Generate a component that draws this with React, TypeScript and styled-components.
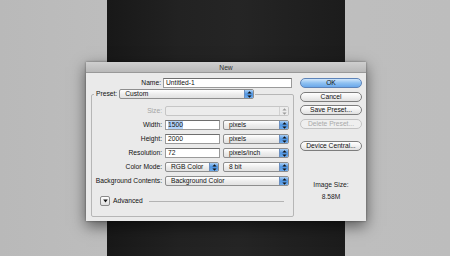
import React from "react";
import styled, { createGlobalStyle, css } from "styled-components";

const Global = createGlobalStyle`
  html, body { margin: 0; padding: 0; }
  body {
    background: #bebebe;
    font-family: "Liberation Sans", Arial, sans-serif;
  }
`;

const Stage = styled.div`
  position: relative;
  width: 450px;
  height: 256px;
  overflow: hidden;
  display: flex;
  background: linear-gradient(90deg, #b9b9b9 0%, #c0c0c0 40%, #bdbdbd 100%);
`;

const DarkPanel = styled.div`
  margin-left: 107px;
  width: 238px;
  height: 256px;
  background: linear-gradient(90deg, #181818 0%, #222 30%, #252525 55%, #1c1c1c 100%);
`;

const Dialog = styled.div`
  position: absolute;
  left: 86px;
  top: 62px;
  width: 280px;
  height: 159px;
  display: flex;
  flex-direction: column;
  background: #eaeaea;
  box-shadow: 0 5px 14px rgba(0, 0, 0, 0.55), 0 0 2px rgba(0, 0, 0, 0.4);
  font-size: 6.7px;
  color: #111;
`;

const TitleBar = styled.div`
  height: 11px;
  flex: none;
  display: flex;
  align-items: center;
  justify-content: center;
  background: linear-gradient(#cfcfcf, #b9b9b9);
  border-bottom: 1px solid #999;
  box-sizing: border-box;
  color: #333;
  font-size: 6.7px;
`;

const Body = styled.div`
  flex: 1;
  display: grid;
  grid-template-columns: 208px 62px;
  column-gap: 6px;
  padding: 5px 4px 0 0;
`;

const LeftCol = styled.div`
  display: flex;
  flex-direction: column;
`;

const NameRow = styled.div`
  display: grid;
  grid-template-columns: 75px 129px;
  column-gap: 2px;
  height: 10px;
  align-items: center;
`;

const Label = styled.span<{ $disabled?: boolean }>`
  text-align: right;
  white-space: nowrap;
  line-height: 10px;
  color: ${(p) => (p.$disabled ? "#a4a4a4" : "#111")};
`;

const TextInput = styled.div`
  height: 10px;
  box-sizing: border-box;
  background: #fff;
  border: 1px solid #9a9a9a;
  border-top-color: #6e6e6e;
  padding-left: 2px;
  display: flex;
  align-items: center;
  line-height: 8px;
  white-space: nowrap;
  overflow: hidden;
`;

const Selected = styled.span`
  background: #b3d2f7;
`;

const Group = styled.fieldset`
  margin: 1px 0 0 5px;
  padding: 0 4px 0 0;
  width: 203px;
  height: 128px;
  box-sizing: border-box;
  border: 1px solid #b6b6b6;
  border-radius: 2px;
  min-width: 0;
`;

const Legend = styled.legend`
  padding: 0 1px 0 2px;
  margin-left: 2px;
  display: flex;
  align-items: center;
  gap: 2px;
  height: 10px;
`;

const Rows = styled.div`
  display: flex;
  flex-direction: column;
  gap: 4px;
  padding-top: 7px;
`;

const FieldRow = styled.div`
  display: grid;
  grid-template-columns: 70px 1fr;
  column-gap: 3px;
  height: 10px;
  align-items: center;
`;

const Pair = styled.div<{ $first: number }>`
  display: grid;
  grid-template-columns: ${(p) => p.$first}px 1fr;
  column-gap: ${(p) => 58 - p.$first}px;
  height: 10px;
`;

const SelectBox = styled.div<{ $w?: number; $disabled?: boolean }>`
  height: 10px;
  box-sizing: border-box;
  ${(p) => (p.$w ? `width: ${p.$w}px;` : "")}
  display: flex;
  align-items: stretch;
  border: 1px solid #8e8e8e;
  border-radius: 2px;
  background: linear-gradient(#ffffff, #ececec 55%, #e2e2e2);
  overflow: hidden;
  ${(p) =>
    p.$disabled &&
    css`
      border-color: #c6c6c6;
      background: #ececec;
    `}
`;

const SelectText = styled.span`
  flex: 1;
  padding-left: 5px;
  line-height: 8px;
  white-space: nowrap;
  overflow: hidden;
`;

const Stepper = styled.span<{ $disabled?: boolean }>`
  width: 8px;
  flex: none;
  display: flex;
  align-items: center;
  justify-content: center;
  border-left: 1px solid #6b8fc0;
  background: linear-gradient(#a9cff5, #4d94e2 50%, #6eaaea);
  ${(p) =>
    p.$disabled &&
    css`
      border-left-color: #d2d2d2;
      background: #ececec;
    `}
`;

const AdvancedRow = styled.div`
  display: flex;
  align-items: center;
  height: 10px;
  margin: 10px 0 0 8px;
`;

const Disclosure = styled.span`
  width: 10px;
  height: 10px;
  box-sizing: border-box;
  border: 1px solid #8a8a8a;
  border-radius: 2px;
  background: linear-gradient(#ffffff, #dedede);
  display: flex;
  align-items: center;
  justify-content: center;
`;

const AdvText = styled.span`
  margin-left: 3px;
  line-height: 10px;
`;

const Rule = styled.span`
  flex: 1;
  height: 1px;
  background: #b3b3b3;
  margin: 0 5px 0 6px;
`;

const RightCol = styled.div`
  display: flex;
  flex-direction: column;
  gap: 3.5px;
`;

const Button = styled.div<{ $primary?: boolean; $disabled?: boolean; $gapTop?: number }>`
  height: 10px;
  box-sizing: border-box;
  border-radius: 6px;
  border: 1px solid #7d7d7d;
  background: linear-gradient(#ffffff, #f1f1f1 50%, #e0e0e0);
  display: flex;
  align-items: center;
  justify-content: center;
  line-height: 8px;
  white-space: nowrap;
  ${(p) => (p.$gapTop ? `margin-top: ${p.$gapTop}px;` : "")}
  ${(p) =>
    p.$primary &&
    css`
      border-color: #5d83b8;
      background: linear-gradient(#cfe6fb, #8fc1f1 50%, #6aa8ea);
    `}
  ${(p) =>
    p.$disabled &&
    css`
      border-color: #c3c3c3;
      color: #a9a9a9;
      background: #efefef;
    `}
`;

const ImageSize = styled.div`
  margin-top: 27px;
  display: flex;
  flex-direction: column;
  align-items: center;
  gap: 4px;
  line-height: 8px;
  color: #222;
`;

const Arrows: React.FC<{ color?: string }> = ({ color = "#111" }) => (
  <svg width="5" height="7" viewBox="0 0 5 7">
    <path d="M2.5 0.3 L4.6 2.6 L0.4 2.6 Z" fill={color} />
    <path d="M2.5 6.7 L4.6 4.4 L0.4 4.4 Z" fill={color} />
  </svg>
);

const Select: React.FC<{ text?: string; w?: number; disabled?: boolean }> = ({ text = "", w, disabled }) => (
  <SelectBox $w={w} $disabled={disabled}>
    <SelectText>{text}</SelectText>
    <Stepper $disabled={disabled}>
      <Arrows color={disabled ? "#9a9a9a" : "#111"} />
    </Stepper>
  </SelectBox>
);

export default function App() {
  return (
    <>
      <Global />
      <Stage>
        <DarkPanel />
        <Dialog>
          <TitleBar>New</TitleBar>
          <Body>
            <LeftCol>
              <NameRow>
                <Label>Name:</Label>
                <TextInput>Untitled-1</TextInput>
              </NameRow>
              <Group>
                <Legend>
                  <Label>Preset:</Label>
                  <Select text="Custom" w={135} />
                </Legend>
                <Rows>
                  <FieldRow>
                    <Label $disabled>Size:</Label>
                    <Select disabled />
                  </FieldRow>
                  <FieldRow>
                    <Label>Width:</Label>
                    <Pair $first={55}>
                      <TextInput>
                        <Selected>1500</Selected>
                      </TextInput>
                      <Select text="pixels" />
                    </Pair>
                  </FieldRow>
                  <FieldRow>
                    <Label>Height:</Label>
                    <Pair $first={55}>
                      <TextInput>2000</TextInput>
                      <Select text="pixels" />
                    </Pair>
                  </FieldRow>
                  <FieldRow>
                    <Label>Resolution:</Label>
                    <Pair $first={55}>
                      <TextInput>72</TextInput>
                      <Select text="pixels/inch" />
                    </Pair>
                  </FieldRow>
                  <FieldRow>
                    <Label>Color Mode:</Label>
                    <Pair $first={54}>
                      <Select text="RGB Color" />
                      <Select text="8 bit" />
                    </Pair>
                  </FieldRow>
                  <FieldRow>
                    <Label>Background Contents:</Label>
                    <Select text="Background Color" />
                  </FieldRow>
                </Rows>
                <AdvancedRow>
                  <Disclosure>
                    <svg width="5" height="4" viewBox="0 0 5 4">
                      <path d="M0.2 0.4 L4.8 0.4 L2.5 3.6 Z" fill="#111" />
                    </svg>
                  </Disclosure>
                  <AdvText>Advanced</AdvText>
                  <Rule />
                </AdvancedRow>
              </Group>
            </LeftCol>
            <RightCol>
              <Button $primary>OK</Button>
              <Button>Cancel</Button>
              <Button>Save Preset...</Button>
              <Button $disabled>Delete Preset...</Button>
              <Button $gapTop={8.5}>Device Central...</Button>
              <ImageSize>
                <span>Image Size:</span>
                <span>8.58M</span>
              </ImageSize>
            </RightCol>
          </Body>
        </Dialog>
      </Stage>
    </>
  );
}
